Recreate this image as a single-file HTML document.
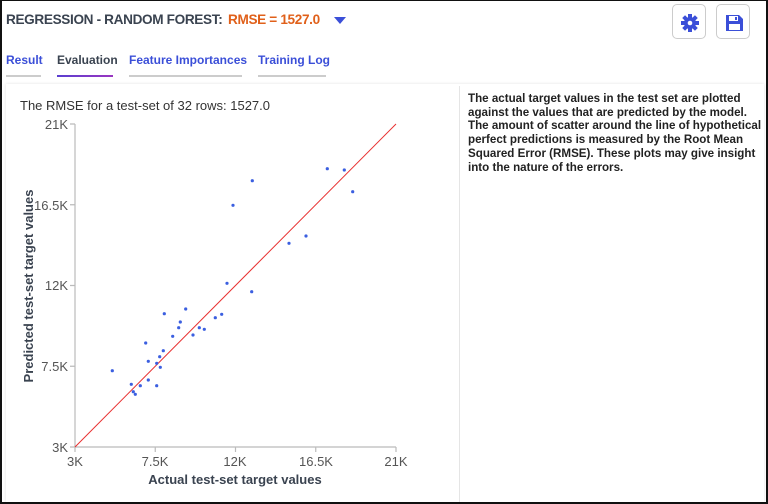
<!DOCTYPE html>
<html><head><style>
*{margin:0;padding:0;box-sizing:border-box}
body{width:768px;height:504px;background:#fff;font-family:"Liberation Sans",Arial,sans-serif;position:relative;overflow:hidden}
.frame{position:absolute;left:0;top:0;width:768px;height:504px;border:2px solid #111;border-top-width:1px}
.title{position:absolute;left:6px;top:12px;font-size:13.6px;letter-spacing:-0.35px;font-weight:bold;color:#3a4350;white-space:nowrap}
.title .rm{color:#e0601a;position:absolute;left:222px}
.caret{position:absolute;left:334px;top:17px;width:0;height:0;border-left:6px solid transparent;border-right:6px solid transparent;border-top:7px solid #3b4fd8}
.btn{position:absolute;top:4px;width:34px;height:35px;border:1px solid #ccc;border-radius:5px;background:#fff}
.tab{position:absolute;top:53px;font-size:12px;font-weight:bold;color:#3b4fd8}
.ul{position:absolute;top:75px;height:2px;background:#ccc}
.card{position:absolute;left:6px;top:84px;width:758px;height:418px;box-shadow:0 0 3px rgba(0,0,0,.12)}
.div{position:absolute;left:459px;top:86px;width:1px;height:416px;background:#e5e5e5}
.desc{position:absolute;left:468px;top:92px;width:298px;font-size:11.6px;font-weight:bold;color:#222;line-height:13.7px;white-space:nowrap}
.sub{position:absolute;left:20px;top:98px;font-size:13px;color:#333}
</style></head><body>
<div class="frame"></div>
<div class="title">REGRESSION - RANDOM FOREST:<span class="rm">RMSE = 1527.0</span></div>
<div class="caret"></div>
<div class="btn" style="left:672px"><svg width="34" height="35" viewBox="0 0 34 35"><g transform="translate(17,18)" fill="#3b4fd8"><circle r="6"/><g><rect x="-2" y="-9" width="4" height="18"/><rect x="-2" y="-9" width="4" height="18" transform="rotate(45)"/><rect x="-2" y="-9" width="4" height="18" transform="rotate(90)"/><rect x="-2" y="-9" width="4" height="18" transform="rotate(135)"/></g><circle r="2.3" fill="#fff"/></g></svg></div>
<div class="btn" style="left:716px"><svg width="34" height="35" viewBox="0 0 34 35"><path d="M9 10h13l4 4v12H9z" fill="#3b4fd8"/><rect x="12" y="11" width="9" height="5" fill="#fff"/><rect x="18" y="12" width="2" height="3" fill="#3b4fd8"/><rect x="12" y="19" width="11" height="6" fill="#fff"/></svg></div>
<div class="tab" style="left:6px">Result</div>
<div class="tab" style="left:57px;color:#3a4350">Evaluation</div>
<div class="tab" style="left:129px">Feature Importances</div>
<div class="tab" style="left:258px">Training Log</div>
<div class="ul" style="left:6px;width:35px"></div>
<div class="ul" style="left:57px;width:56px;background:linear-gradient(90deg,#5a3fd0,#9a35c0)"></div>
<div class="ul" style="left:129px;width:113px"></div>
<div class="ul" style="left:258px;width:68px"></div>
<div class="card"></div>
<div class="div"></div>
<div class="sub">The RMSE for a test-set of 32 rows: 1527.0</div>
<div class="desc">The actual target values in the test set are plotted<br>against the values that are predicted by the model.<br>The amount of scatter around the line of hypothetical<br>perfect predictions is measured by the Root Mean<br>Squared Error (RMSE). These plots may give insight<br>into the nature of the errors.</div>
<svg style="position:absolute;left:0;top:0" width="460" height="504" font-family="Liberation Sans,Arial,sans-serif">
<g stroke="#bbb" stroke-width="1.2" fill="none">
<path d="M75 124V447H396"/>
<path d="M70 124H75M70 204.75H75M70 285.5H75M70 366.25H75M70 447H75"/>
<path d="M75 447V452M155.25 447V452M235.5 447V452M315.75 447V452M396 447V452"/>
</g>
<line x1="75" y1="447" x2="396" y2="124" stroke="#e83030" stroke-width="1"/>
<g font-size="13" fill="#555" text-anchor="end">
<text x="68" y="129">21K</text><text x="68" y="210">16.5K</text><text x="68" y="290">12K</text><text x="68" y="371">7.5K</text><text x="68" y="452">3K</text>
</g>
<g font-size="13" fill="#555" text-anchor="middle">
<text x="75" y="466">3K</text><text x="155" y="466">7.5K</text><text x="235" y="466">12K</text><text x="316" y="466">16.5K</text><text x="396" y="466">21K</text>
</g>
<text x="235" y="484" font-size="13" font-weight="bold" fill="#3a4350" text-anchor="middle">Actual test-set target values</text>
<text transform="translate(33,286) rotate(-90)" font-size="13" font-weight="bold" fill="#3a4350" text-anchor="middle">Predicted test-set target values</text>
<g fill="#3b5fe0">
<circle cx="112.3" cy="370.7" r="1.6"/><circle cx="131.3" cy="384.3" r="1.6"/><circle cx="133.3" cy="391.7" r="1.6"/><circle cx="135.3" cy="394.3" r="1.6"/>
<circle cx="140.3" cy="385.7" r="1.6"/><circle cx="145.7" cy="343" r="1.6"/><circle cx="148.3" cy="361.3" r="1.6"/><circle cx="148.3" cy="380" r="1.6"/>
<circle cx="156.7" cy="385.7" r="1.6"/><circle cx="156.7" cy="363.3" r="1.6"/><circle cx="159.7" cy="356.7" r="1.6"/><circle cx="160.3" cy="367.3" r="1.6"/>
<circle cx="163.3" cy="350.7" r="1.6"/><circle cx="164.3" cy="313.7" r="1.6"/><circle cx="172.7" cy="336.3" r="1.6"/><circle cx="178.7" cy="327.7" r="1.6"/>
<circle cx="180.3" cy="322" r="1.6"/><circle cx="185.7" cy="309" r="1.6"/><circle cx="193" cy="335" r="1.6"/><circle cx="199.3" cy="327.7" r="1.6"/>
<circle cx="204.3" cy="329.3" r="1.6"/><circle cx="215.3" cy="317.7" r="1.6"/><circle cx="221.7" cy="314.3" r="1.6"/><circle cx="227" cy="283.3" r="1.6"/>
<circle cx="233" cy="205.3" r="1.6"/><circle cx="251.7" cy="291.7" r="1.6"/><circle cx="252.3" cy="180.7" r="1.6"/><circle cx="289" cy="243.3" r="1.6"/>
<circle cx="306" cy="236" r="1.6"/><circle cx="327.3" cy="168.7" r="1.6"/><circle cx="344.3" cy="170" r="1.6"/><circle cx="352.7" cy="191.7" r="1.6"/>
</g>
</svg>
</body></html>
